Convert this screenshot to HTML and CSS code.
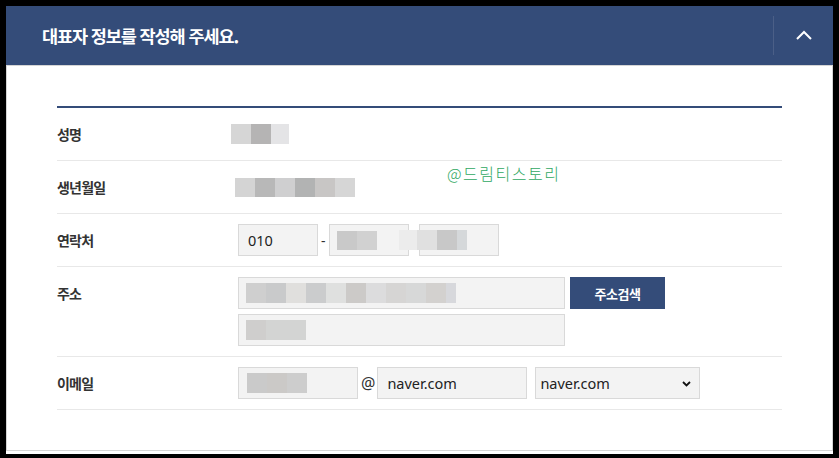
FILE: index.html
```html
<!DOCTYPE html>
<html lang="ko">
<head>
<meta charset="utf-8">
<title>대표자 정보</title>
<link rel="stylesheet" href="styles.css">
</head>
<body>
<div class="frame">
  <section class="panel">
    <header class="panel-head">
      <h2 class="panel-title">대표자 정보를 작성해 주세요.</h2>
      <button class="toggle" type="button" aria-label="접기">
        <svg width="16" height="10" viewBox="0 0 16 10"><polyline points="1,9 8,2 15,9" fill="none" stroke="#fff" stroke-width="2"/></svg>
      </button>
    </header>
    <div class="panel-body">
      <div class="form">
        <div class="row">
          <div class="label">성명</div>
          <div class="value"><span class="blur blur-name"></span></div>
        </div>
        <div class="row">
          <div class="label">생년월일</div>
          <div class="value"><span class="blur blur-birth"></span></div>
        </div>
        <div class="row">
          <div class="label">연락처</div>
          <div class="value">
            <div class="field w80"><span class="txt">010</span></div>
            <span class="dash">-</span>
            <div class="field w80"><span class="blur blur-ph2"></span></div>
            <span class="blur blur-dash"></span>
            <div class="field w80 ph3"><span class="blur blur-ph3"></span></div>
          </div>
        </div>
        <div class="row">
          <div class="label">주소</div>
          <div class="value col">
            <div class="line">
              <div class="field w327"><span class="blur blur-addr1"></span></div>
              <button class="btn" type="button">주소검색</button>
            </div>
            <div class="line">
              <div class="field w327"><span class="blur blur-addr2"></span></div>
            </div>
          </div>
        </div>
        <div class="row">
          <div class="label">이메일</div>
          <div class="value">
            <div class="field w120"><span class="blur blur-mail"></span></div>
            <span class="at">@</span>
            <div class="field w150"><span class="txt">naver.com</span></div>
            <div class="select w165"><span class="txt">naver.com</span>
              <svg class="caret" width="9" height="6" viewBox="0 0 9 6"><polyline points="1,1 4.5,4.5 8,1" fill="none" stroke="#111" stroke-width="1.8"/></svg>
            </div>
          </div>
        </div>
        <div class="watermark">@드림티스토리</div>
      </div>
    </div>
  </section>
</div>
</body>
</html>
```

FILE: styles.css
```css
* { box-sizing: border-box; }
html, body { margin: 0; padding: 0; }
body {
  background: #000;
  padding: 6px 6px 4px 6px;
  font-family: "Noto Sans CJK KR", "Noto Sans", sans-serif;
  color: #333;
}
.frame {
  background: #fff;
  height: 448px;
}
.panel { width: 827px; }
.panel-head {
  height: 59px;
  background: #344c79;
  display: flex;
  align-items: center;
  justify-content: space-between;
  padding-left: 36px;
}
.panel-title {
  margin: 0;
  color: #fff;
  font-size: 17.5px;
  font-weight: 700;
  letter-spacing: -1.1px;
}
.toggle {
  width: 60px;
  height: 39px;
  border: 0;
  border-left: 1px solid #4b5f87;
  background: transparent;
  padding: 0;
  display: flex;
  align-items: center;
  justify-content: center;
  padding-bottom: 2px;
}
.panel-body {
  border: 1px solid #d5d5d5;
  padding: 40px 50px 40px 50px;
  height: 386px;
}
.form {
  position: relative;
  border-top: 2px solid #344c79;
}
.row {
  display: grid;
  grid-template-columns: 181px 1fr;
  padding: 10px 0;
  border-bottom: 1px solid #e8e8e8;
  align-items: start;
}
.label {
  line-height: 32px;
  font-size: 14px;
  font-weight: 700;
  letter-spacing: -0.8px;
  color: #333;
}
.value {
  display: flex;
  align-items: center;
  min-height: 32px;
}
.value.col {
  flex-direction: column;
  align-items: flex-start;
  gap: 5px;
}
.line { display: flex; gap: 5px; }
.field, .select {
  height: 32px;
  background: #f3f3f3;
  border: 1px solid #d9d9d9;
  display: flex;
  align-items: center;
  padding-left: 9px;
}
.w80 { width: 80px; }
.w120 { width: 120px; }
.w150 { width: 150px; }
.w165 { width: 165px; }
.w327 { width: 327px; }
.txt {
  font-family: "Noto Sans", sans-serif;
  font-size: 14.5px;
  color: #222;
}
.dash { margin: 0 3px 0 3px; font-size: 14px; color: #333; font-family: "Noto Sans", sans-serif; }
.at { margin: 0 2px 0 3px; font-size: 16px; color: #333; font-family: "Noto Sans", sans-serif; }
.field.w150 { margin-right: 8px; }
.select { position: relative; padding-left: 4px; }
.caret { position: absolute; right: 8px; top: 13px; }
.btn {
  width: 95px;
  height: 32px;
  border: 0;
  background: #344c79;
  color: #fff;
  font-family: "Noto Sans CJK KR", sans-serif;
  font-size: 13px;
  font-weight: 700;
  letter-spacing: -0.5px;
}
.blur { display: block; }
.blur-name {
  width: 58px; height: 20px; margin-left: -7px;
  background: linear-gradient(90deg, #d6d6d6 0 20px, #b5b4b4 20px 40px, #e4e4e6 40px 60px);
}
.blur-birth {
  width: 120px; height: 19px; margin-left: -3px;
  background: linear-gradient(90deg, #d4d4d4 0 20px, #b8b8b8 20px 40px, #cfcfd0 40px 60px, #b2b3b3 60px 80px, #c8c6c5 80px 100px, #d6d6d6 100px 120px);
}
.blur-ph2 {
  width: 40px; height: 19px; margin-left: -2px;
  background: linear-gradient(90deg, #c9c9c9 0 20px, #d1d1d1 20px 40px);
}
.blur-dash {
  width: 22px; height: 20px; margin: 0 -2px 0 -10px;
  background: #ececec;
  position: relative;
}
.ph3 { padding-left: 0; }
.blur-ph3 {
  width: 50px; height: 20px; margin-left: -3px;
  position: relative;
  background: linear-gradient(90deg, #e0e0e0 0 20px, #c8c8c8 20px 40px, #d5d8da 40px 52px);
}
.blur-addr1 {
  width: 210px; height: 20px; margin-left: -2px;
  background: linear-gradient(90deg, #cfcfcf 0 20px, #c9cacb 20px 40px, #e0dfdd 40px 60px, #cbcccd 60px 80px, #dfe0df 80px 100px, #cccac8 100px 120px, #dcdcdd 120px 140px, #d6d5d4 140px 160px, #d7d8d8 160px 180px, #d3d1cf 180px 200px, #d7d8dc 200px 210px);
}
.blur-addr2 {
  width: 60px; height: 20px; margin-left: -2px;
  background: linear-gradient(90deg, #cfcecd 0 20px, #d3d4d3 20px 60px);
}
.blur-mail {
  width: 60px; height: 20px; margin-left: -1px;
  background: linear-gradient(90deg, #cacaca 0 20px, #cbc9c7 20px 40px, #cdcdcd 40px 60px);
}
.watermark {
  position: absolute;
  left: 390px;
  top: 54px;
  font-family: "Noto Sans CJK KR", sans-serif;
  font-weight: 300;
  font-size: 16px;
  letter-spacing: 1.5px;
  color: #2fa862;
  line-height: 22px;
}
```
